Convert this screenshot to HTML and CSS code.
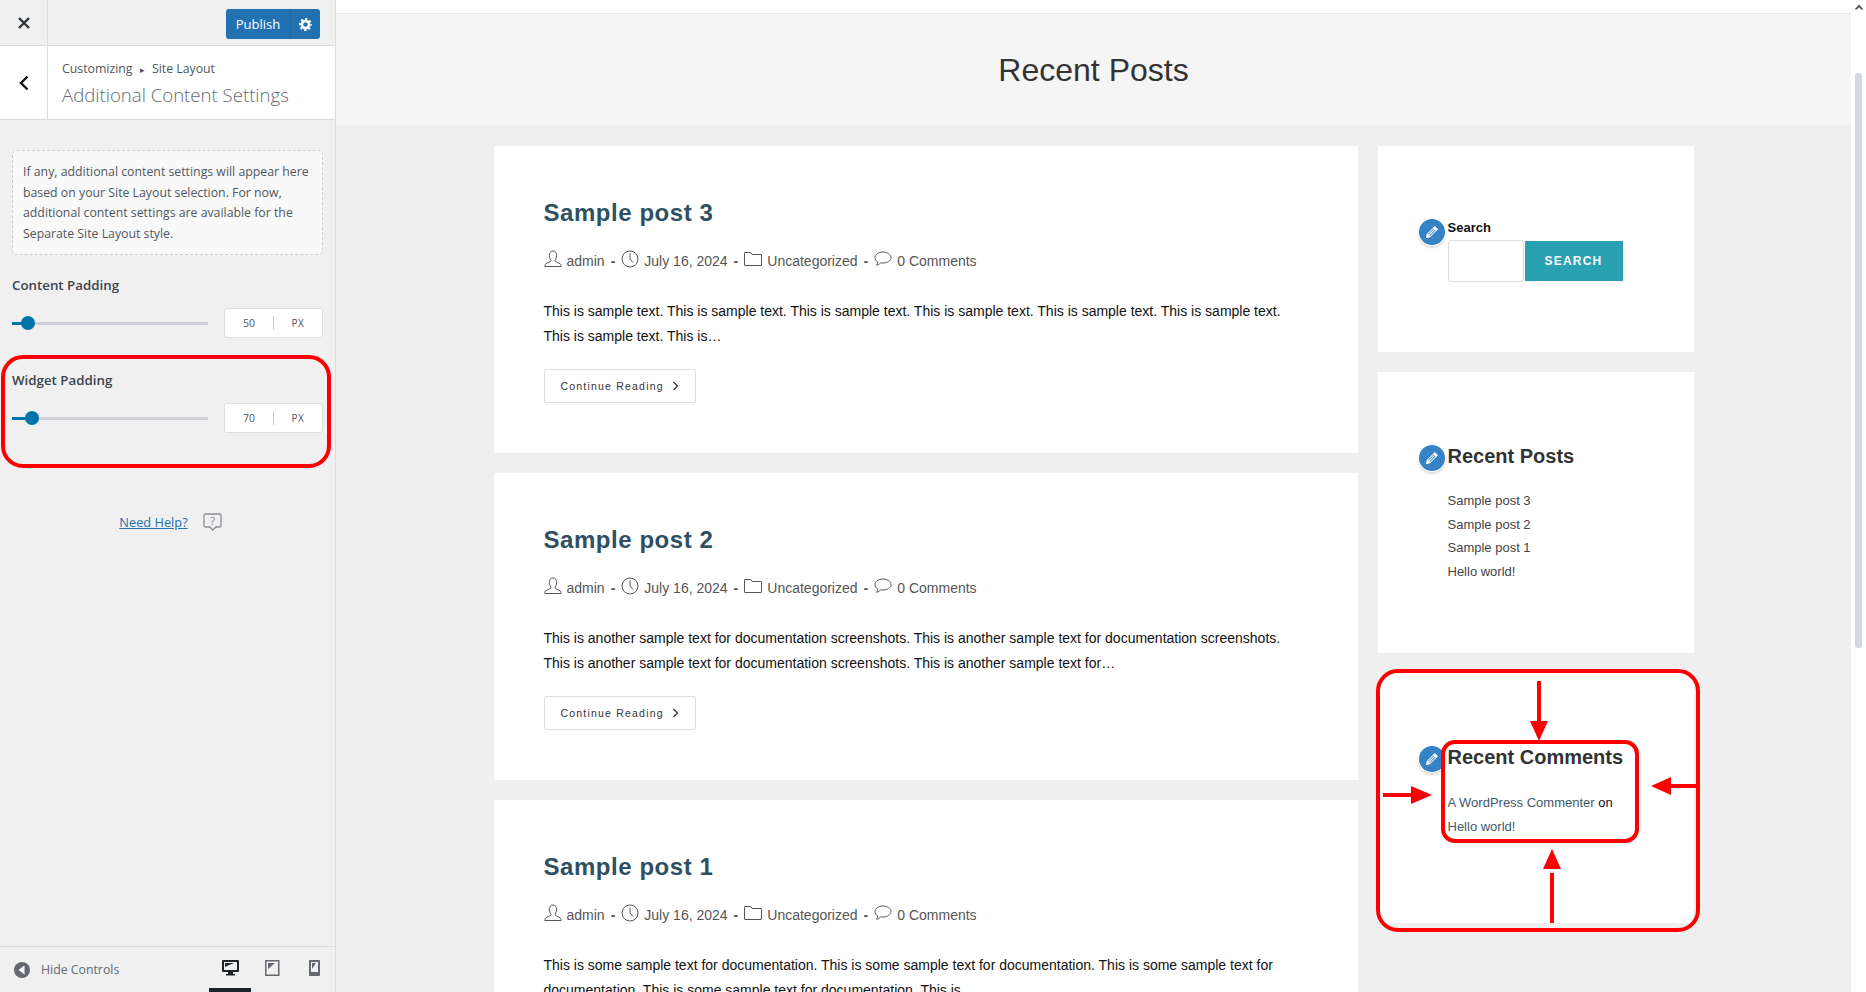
FILE: index.html
```html
<!DOCTYPE html>
<html lang="en">
<head>
    <meta charset="UTF-8">
    <title>Customize: Additional Content Settings</title>
    <link rel="stylesheet" href="styles.css">
</head>
<body>

<div class="app">
    <aside class="controls">
        <div class="top-bar">
            <button class="close-btn" aria-label="Close">
                <svg width="14" height="14" viewBox="0 0 14 14"><path d="M2 2l10 10M12 2L2 12" stroke="#2c3338" stroke-width="2.4" fill="none"/></svg>
            </button>
            <div class="publish">
                <span class="publish-label">Publish</span>
                <span class="publish-gear">
                    <svg width="13" height="13" viewBox="0 0 20 20"><circle cx="10" cy="10" r="5.500" fill="none" stroke="#fff" stroke-width="4"/><circle cx="10" cy="10" r="8.300" fill="none" stroke="#fff" stroke-width="3.400" stroke-dasharray="3.300 3.220" stroke-dashoffset="1.650"/></svg>
                </span>
            </div>
        </div>

        <div class="section-head">
            <button class="back-btn" aria-label="Back">
                <svg width="10" height="16" viewBox="0 0 10 16"><path d="M8.500 1.500L2 8l6.500 6.500" stroke="#111" stroke-width="2.400" fill="none"/></svg>
            </button>
            <div class="section-title">
                <div class="crumbs">Customizing <span class="crumb-arrow">▸</span> Site Layout</div>
                <h2>Additional Content Settings</h2>
            </div>
        </div>

        <div class="panel">
            <div class="notice">If any, additional content settings will appear here based on your Site Layout selection. For now, additional content settings are available for the Separate Site Layout style.</div>

            <div class="setting">
                <div class="setting-label">Content Padding</div>
                <div class="setting-row">
                    <div class="slider"><span class="slider-fill w50"></span><span class="slider-knob"></span></div>
                    <div class="num-box"><span class="num">50</span><span class="unit">PX</span></div>
                </div>
            </div>

            <div class="setting">
                <div class="setting-label">Widget Padding</div>
                <div class="setting-row">
                    <div class="slider"><span class="slider-fill w70"></span><span class="slider-knob"></span></div>
                    <div class="num-box"><span class="num">70</span><span class="unit">PX</span></div>
                </div>
            </div>

            <div class="help">
                <a href="#">Need Help?</a>
                <svg width="19" height="18" viewBox="0 0 19 18"><path d="M2.500 1h14a1.500 1.500 0 0 1 1.500 1.500v10a1.500 1.500 0 0 1-1.500 1.500H13l-3.500 3L7 14H2.500A1.500 1.500 0 0 1 1 12.500v-10A1.500 1.500 0 0 1 2.500 1z" fill="none" stroke="#8c8f94" stroke-width="1.300"/><text x="9.500" y="11.500" text-anchor="middle" class="help-mark">?</text></svg>
            </div>
        </div>

        <div class="foot">
            <div class="hide-controls">
                <svg width="16" height="16" viewBox="0 0 16 16"><circle cx="8" cy="8" r="8" fill="#646970"/><path d="M10.500 3.500v9L4.500 8z" fill="#fff"/></svg>
                <span>Hide Controls</span>
            </div>
            <div class="devices">
                <span class="device active">
                    <svg width="17" height="16" viewBox="0 0 17 16"><path fill="#1d2327" fill-rule="evenodd" d="M1 0h15a1 1 0 0 1 1 1v10a1 1 0 0 1-1 1h-5v2h2v1.500H4V14h2v-2H1a1 1 0 0 1-1-1V1a1 1 0 0 1 1-1zm1 2v8h13V2zm1 1h9L6 5.500 3 7z"/></svg>
                </span>
                <span class="device">
                    <svg width="15" height="16" viewBox="0 0 15 16"><path fill="#646970" fill-rule="evenodd" d="M0 0h14.500v16H0zm1.500 1.500v13H13v-13zM3 3h7L3 9z"/></svg>
                </span>
                <span class="device">
                    <svg width="11" height="16" viewBox="0 0 11 16"><path fill="#646970" fill-rule="evenodd" d="M1 0h9a1 1 0 0 1 1 1v14a1 1 0 0 1-1 1H1a1 1 0 0 1-1-1V1a1 1 0 0 1 1-1zm1 2v10h7V2zm1 1h4L3 9z"/></svg>
                </span>
            </div>
        </div>
    </aside>

    <main class="preview">
        <div class="site">
            <div class="site-top"></div>
            <header class="page-header"><h1>Recent Posts</h1></header>

            <div class="site-body">
                <div class="posts">
                    <article class="post">
                        <h2>Sample post 3</h2>
                        <div class="meta">
                            <svg class="ic" width="18" height="18" viewBox="0 0 18 18"><path d="M9 1c2.300 0 3.700 1.800 3.700 4.300S11.200 10 11 10.800c0 1 4 2 5.500 3.300.6.500.7 2.400.7 2.400H.8s.1-1.900.7-2.400C3 12.800 7 11.800 7 10.800c-.2-.8-1.700-3-1.700-5.500S6.700 1 9 1z" fill="none" stroke="#555" stroke-width="1"/></svg>
                            <span>admin</span><b>-</b>
                            <svg class="ic" width="18" height="18" viewBox="0 0 18 18"><circle cx="9" cy="9" r="8" fill="none" stroke="#555" stroke-width="1"/><path d="M9 3.500V9l3 3.500" fill="none" stroke="#555" stroke-width="1"/></svg>
                            <span>July 16, 2024</span><b>-</b>
                            <svg class="ic" width="18" height="14" viewBox="0 0 18 14"><path d="M.5 1.500v11.500a.5.5 0 0 0 .5.500h16a.5.5 0 0 0 .5-.500V3a.5.5 0 0 0-.5-.500H8L6.800.5H1a.5.5 0 0 0-.5 1z" fill="none" stroke="#555" stroke-width="1"/></svg>
                            <span>Uncategorized</span><b>-</b>
                            <svg class="ic" width="18" height="16" viewBox="0 0 18 16"><path d="M9 1c4.500 0 8 2.500 8 5.500S13.500 12 9 12c-.8 0-1.500 0-2.200-.2C5.500 13 4 14 2.500 14.300c.8-1 1.200-2 1.200-3.300C2 10 1 8.300 1 6.500 1 3.500 4.500 1 9 1z" fill="none" stroke="#555" stroke-width="1"/></svg>
                            <span>0 Comments</span>
                        </div>
                        <p>This is sample text. This is sample text. This is sample text. This is sample text. This is sample text. This is sample text. This is sample text. This is…</p>
                        <a class="more" href="#">Continue Reading <svg width="7" height="10" viewBox="0 0 7 10"><path d="M1.500 1l4 4-4 4" fill="none" stroke="#333" stroke-width="1.300"/></svg></a>
                    </article>

                    <article class="post">
                        <h2>Sample post 2</h2>
                        <div class="meta">
                            <svg class="ic" width="18" height="18" viewBox="0 0 18 18"><path d="M9 1c2.300 0 3.700 1.800 3.700 4.300S11.200 10 11 10.800c0 1 4 2 5.500 3.300.6.500.7 2.400.7 2.400H.8s.1-1.900.7-2.400C3 12.800 7 11.800 7 10.800c-.2-.8-1.700-3-1.700-5.500S6.700 1 9 1z" fill="none" stroke="#555" stroke-width="1"/></svg>
                            <span>admin</span><b>-</b>
                            <svg class="ic" width="18" height="18" viewBox="0 0 18 18"><circle cx="9" cy="9" r="8" fill="none" stroke="#555" stroke-width="1"/><path d="M9 3.500V9l3 3.500" fill="none" stroke="#555" stroke-width="1"/></svg>
                            <span>July 16, 2024</span><b>-</b>
                            <svg class="ic" width="18" height="14" viewBox="0 0 18 14"><path d="M.5 1.500v11.500a.5.5 0 0 0 .5.500h16a.5.5 0 0 0 .5-.500V3a.5.5 0 0 0-.5-.500H8L6.800.5H1a.5.5 0 0 0-.5 1z" fill="none" stroke="#555" stroke-width="1"/></svg>
                            <span>Uncategorized</span><b>-</b>
                            <svg class="ic" width="18" height="16" viewBox="0 0 18 16"><path d="M9 1c4.500 0 8 2.500 8 5.500S13.500 12 9 12c-.8 0-1.500 0-2.200-.2C5.500 13 4 14 2.500 14.300c.8-1 1.200-2 1.200-3.300C2 10 1 8.300 1 6.500 1 3.500 4.500 1 9 1z" fill="none" stroke="#555" stroke-width="1"/></svg>
                            <span>0 Comments</span>
                        </div>
                        <p>This is another sample text for documentation screenshots. This is another sample text for documentation screenshots. This is another sample text for documentation screenshots. This is another sample text for…</p>
                        <a class="more" href="#">Continue Reading <svg width="7" height="10" viewBox="0 0 7 10"><path d="M1.500 1l4 4-4 4" fill="none" stroke="#333" stroke-width="1.300"/></svg></a>
                    </article>

                    <article class="post">
                        <h2>Sample post 1</h2>
                        <div class="meta">
                            <svg class="ic" width="18" height="18" viewBox="0 0 18 18"><path d="M9 1c2.300 0 3.700 1.800 3.700 4.300S11.200 10 11 10.800c0 1 4 2 5.500 3.300.6.500.7 2.400.7 2.400H.8s.1-1.900.7-2.400C3 12.800 7 11.800 7 10.800c-.2-.8-1.700-3-1.700-5.500S6.700 1 9 1z" fill="none" stroke="#555" stroke-width="1"/></svg>
                            <span>admin</span><b>-</b>
                            <svg class="ic" width="18" height="18" viewBox="0 0 18 18"><circle cx="9" cy="9" r="8" fill="none" stroke="#555" stroke-width="1"/><path d="M9 3.500V9l3 3.500" fill="none" stroke="#555" stroke-width="1"/></svg>
                            <span>July 16, 2024</span><b>-</b>
                            <svg class="ic" width="18" height="14" viewBox="0 0 18 14"><path d="M.5 1.500v11.500a.5.5 0 0 0 .5.500h16a.5.5 0 0 0 .5-.500V3a.5.5 0 0 0-.5-.500H8L6.800.5H1a.5.5 0 0 0-.5 1z" fill="none" stroke="#555" stroke-width="1"/></svg>
                            <span>Uncategorized</span><b>-</b>
                            <svg class="ic" width="18" height="16" viewBox="0 0 18 16"><path d="M9 1c4.500 0 8 2.500 8 5.500S13.500 12 9 12c-.8 0-1.500 0-2.200-.2C5.500 13 4 14 2.500 14.300c.8-1 1.200-2 1.200-3.300C2 10 1 8.300 1 6.500 1 3.500 4.500 1 9 1z" fill="none" stroke="#555" stroke-width="1"/></svg>
                            <span>0 Comments</span>
                        </div>
                        <p>This is some sample text for documentation. This is some sample text for documentation. This is some sample text for documentation. This is some sample text for documentation. This is…</p>
                    </article>
                </div>

                <div class="widgets">
                    <section class="widget widget-search">
                        <span class="pencil"><svg width="14" height="14" viewBox="0 0 14 14"><path fill="#fff" d="M9.800 1l3.200 3.200-8 8L.8 13.200 1.800 9zM8.600 3.400L3 9l.6.600 5.600-5.600zm1.400 1.400L4.400 10.400l.6.600L10.600 5.400z"/></svg></span>
                        <label class="search-label">Search</label>
                        <div class="search-row">
                            <input class="search-input" type="text">
                            <button class="search-btn">SEARCH</button>
                        </div>
                    </section>

                    <section class="widget widget-recent">
                        <span class="pencil"><svg width="14" height="14" viewBox="0 0 14 14"><path fill="#fff" d="M9.800 1l3.200 3.200-8 8L.8 13.200 1.800 9zM8.600 3.400L3 9l.6.600 5.600-5.600zm1.400 1.400L4.400 10.400l.6.600L10.600 5.400z"/></svg></span>
                        <h3>Recent Posts</h3>
                        <ul>
                            <li>Sample post 3</li>
                            <li>Sample post 2</li>
                            <li>Sample post 1</li>
                            <li>Hello world!</li>
                        </ul>
                    </section>

                    <section class="widget widget-comments">
                        <span class="pencil"><svg width="14" height="14" viewBox="0 0 14 14"><path fill="#fff" d="M9.800 1l3.200 3.200-8 8L.8 13.200 1.800 9zM8.600 3.400L3 9l.6.600 5.600-5.600zm1.400 1.400L4.400 10.400l.6.600L10.600 5.400z"/></svg></span>
                        <h3>Recent Comments</h3>
                        <p><a href="#">A WordPress Commenter</a> on <a href="#">Hello world!</a></p>
                    </section>
                </div>
            </div>
        </div>

        <div class="scrollbar">
            <svg width="10" height="6" viewBox="0 0 10 6"><path d="M5 .5L9.500 5.500H7L5 3.300 3 5.500H.5z" fill="#555"/></svg>
            <span class="thumb"></span>
        </div>
    </main>
</div>

<!-- red annotations drawn over the screenshot -->
<svg class="marks" width="1866" height="992" viewBox="0 0 1866 992">
    <g fill="none" stroke="#f00" stroke-width="4">
        <rect x="3" y="357" width="326" height="109" rx="20"/>
        <rect x="1378" y="671" width="320" height="259" rx="20"/>
        <rect x="1443" y="742" width="194" height="99" rx="12"/>
        <path d="M1539 681v45M1552 923v-50M1383 795h32M1697 786h-32"/>
    </g>
    <g fill="#f00">
        <path d="M1530 721h18l-9 20zM1543 869h18l-9-20zM1411 786v18l21-9zM1671 777v18l-20-9z"/>
    </g>
</svg>

</body>
</html>
```

FILE: styles.css
```css
* {
    box-sizing: border-box;
}
html, body {
    margin: 0;
    height: 100%;
    overflow: hidden;
}
body {
    font-family: "Liberation Sans", Arial, sans-serif;
    background-color: #efefef;
    color: #333;
}
.app {
    display: flex;
    height: 992px;
}
button {
    border: none;
    background: none;
    padding: 0;
    font: inherit;
}

/* customizer panel */
.controls {
    width: 336px;
    flex-shrink: 0;
    display: flex;
    flex-direction: column;
    background-color: #f0f0f1;
    border-right: 1px solid #dcdcde;
    font-family: "Open Sans", "Noto Sans", sans-serif;
    color: #50575e;
}
.top-bar {
    height: 46px;
    display: flex;
    justify-content: space-between;
    align-items: center;
    padding-right: 15px;
    border-bottom: 1px solid #dcdcde;
}
.close-btn {
    width: 48px;
    height: 45px;
    border-right: 1px solid #dcdcde;
    display: flex;
    align-items: center;
    justify-content: center;
}
.publish {
    display: flex;
    width: 94px;
    height: 30px;
    margin-top: 3px;
    background-color: #2271b1;
    border-radius: 3px;
    color: #fff;
    font-size: 13px;
}
.publish-label {
    width: 64px;
    line-height: 30px;
    text-align: center;
}
.publish-gear {
    flex: 1;
    display: flex;
    align-items: center;
    justify-content: center;
    border-left: 1px solid #1f6aa6;
}
.section-head {
    height: 74px;
    display: flex;
    background-color: #fff;
    border-bottom: 1px solid #dcdcde;
}
.back-btn {
    width: 48px;
    border-right: 1px solid #dcdcde;
    display: flex;
    align-items: center;
    justify-content: center;
}
.section-title {
    padding: 14px 0 0 14px;
}
.crumbs {
    font-size: 12.300px;
    line-height: 18px;
    color: #50575e;
}
.crumb-arrow {
    font-size: 9px;
    margin: 0 4px;
}
.section-title h2 {
    margin: 4px 0 0;
    font-size: 18.600px;
    font-weight: 300;
    line-height: 24px;
    color: #646970;
}
.panel {
    flex: 1;
    padding: 30px 12px 0;
}
.notice {
    height: 105px;
    padding: 11px 10px 0;
    background-color: #f9f9f9;
    border: 1px dashed #ccc;
    border-radius: 5px;
    font-size: 12.300px;
    line-height: 20.700px;
    color: #50575e;
}
.setting {
    margin-top: 21px;
    height: 74px;
}
.setting-label {
    font-size: 13.300px;
    font-weight: 600;
    line-height: 18px;
    color: #3c434a;
}
.setting-row {
    display: flex;
    justify-content: space-between;
    align-items: center;
    margin-top: 14px;
}
.slider {
    position: relative;
    width: 196px;
    height: 3px;
    background-color: #ccd0d4;
}
.slider-fill {
    position: absolute;
    left: 0;
    top: 0;
    height: 3px;
    background-color: #0073aa;
}
.slider-knob {
    position: absolute;
    top: -6px;
    width: 14px;
    height: 14px;
    border-radius: 50%;
    background-color: #0073aa;
}
.slider-fill.w50 {
    width: 16px;
}
.slider-fill.w70 {
    width: 20px;
}
.w50 + .slider-knob {
    left: 9px;
}
.w70 + .slider-knob {
    left: 13px;
}
.num-box {
    width: 99px;
    height: 30px;
    display: flex;
    align-items: center;
    background-color: #fff;
    border: 1px solid #ddd;
    border-radius: 3px;
    font-size: 10.500px;
    color: #50575e;
}
.num {
    width: 49px;
    text-align: center;
    border-right: 1px solid #ccc;
    line-height: 14px;
}
.unit {
    flex: 1;
    text-align: center;
    font-size: 10px;
    letter-spacing: 0.5px;
}
.help {
    display: flex;
    justify-content: center;
    align-items: center;
    gap: 15px;
    margin-top: 68px;
    padding-left: 6px;
    font-size: 12.800px;
}
.help a {
    color: #2271b1;
}
.help-mark {
    font-size: 11px;
    fill: #8c8f94;
}
.foot {
    height: 46px;
    display: flex;
    justify-content: space-between;
    padding: 0 0 0 14px;
    border-top: 1px solid #dcdcde;
}
.hide-controls {
    display: flex;
    align-items: center;
    gap: 11px;
    font-size: 12.300px;
    color: #646970;
}
.devices {
    display: flex;
    align-items: center;
    height: 100%;
}
.device {
    display: flex;
    height: 100%;
    align-items: center;
    justify-content: center;
    width: 42px;
    border-bottom: 4px solid transparent;
}
.device.active {
    border-bottom-color: #1d2327;
}

/* site preview */
.preview {
    flex: 1;
    display: flex;
    background-color: #fff;
    min-width: 0;
}
.site {
    flex: 1;
    background-color: #efefef;
    overflow: hidden;
    min-width: 0;
}
.site-top {
    height: 14px;
    background-color: #fff;
    border-bottom: 1px solid #e9e9e4;
}
.page-header {
    height: 112px;
    background-color: #f5f5f5;
    display: flex;
    align-items: center;
    justify-content: center;
}
.page-header h1 {
    margin: 0;
    font-size: 32px;
    font-weight: 400;
    color: #333;
}
.site-body {
    display: flex;
    justify-content: center;
    gap: 20px;
    padding-top: 20px;
}
.posts {
    width: 864px;
}
.post {
    background-color: #fff;
    padding: 51px 50px 50px;
    height: 307px;
    margin-bottom: 20px;
}
.post h2 {
    margin: 0;
    font-size: 24px;
    line-height: 32px;
    font-weight: 700;
    letter-spacing: 0.550px;
    color: #2f4f63;
}
.meta {
    display: flex;
    align-items: center;
    margin-top: 20px;
    height: 24px;
    font-size: 14px;
    color: #555;
}
.meta .ic {
    margin-right: 5px;
    position: relative;
    top: -2px;
}
.meta b {
    margin: 0 6px;
    font-weight: 700;
}
.post p {
    margin: 26px 0 0;
    font-size: 14px;
    line-height: 25px;
    color: #111;
}
.more {
    display: inline-flex;
    align-items: center;
    gap: 8px;
    margin-top: 20px;
    height: 34px;
    padding: 0 16px;
    border: 1px solid #ddd;
    border-radius: 2px;
    font-size: 10.500px;
    letter-spacing: 1.200px;
    color: #333;
    text-decoration: none;
}
.widgets {
    width: 316px;
}
.widget {
    position: relative;
    background-color: #fff;
    padding: 70px;
    margin-bottom: 20px;
    font-size: 13px;
    color: #333;
}
.widget h3 {
    margin: 0;
    font-size: 20px;
    line-height: 28px;
    font-weight: 700;
    color: #333;
}
.pencil {
    position: absolute;
    left: 41px;
    width: 26px;
    height: 26px;
    border-radius: 50%;
    background-color: #3582c4;
    box-shadow: 0 0 0 1px #fff, 0 2px 2px 1px #ddd;
    display: flex;
    align-items: center;
    justify-content: center;
}
.widget-search {
    height: 206px;
    padding-top: 74px;
}
.widget-search .pencil {
    top: 73px;
}
.search-label {
    display: block;
    font-size: 13px;
    font-weight: 700;
    line-height: 16px;
    color: #111;
}
.search-row {
    display: flex;
    align-items: center;
    gap: 1px;
    margin-top: 4px;
}
.search-input {
    width: 76px;
    height: 42px;
    border: 1px solid #ddd;
    border-radius: 3px;
}
.search-btn {
    width: 98px;
    height: 40px;
    background-color: #2aa0b3;
    color: #fff;
    font-size: 12px;
    font-weight: 700;
    letter-spacing: 1.200px;
}
.widget-recent {
    height: 281px;
}
.widget-recent .pencil {
    top: 73px;
}
.widget-recent ul {
    list-style: none;
    margin: 19px 0 0;
    padding: 0;
    line-height: 23.500px;
    color: #444;
}
.widget-comments {
    height: 250px;
}
.widget-comments .pencil {
    top: 73px;
}
.widget-comments p {
    margin: 20px 0 0;
    line-height: 23.500px;
    width: 176px;
    color: #111;
}
.widget-comments a {
    color: #44596a;
    text-decoration: none;
}
.scrollbar {
    position: relative;
    width: 15px;
    background-color: #fff;
    display: flex;
    flex-direction: column;
    align-items: center;
    padding-top: 4px;
}
.thumb {
    margin-top: 63px;
    flex-shrink: 0;
    width: 7px;
    height: 575px;
    border-radius: 3px;
    background-color: #cfdae3;
}

/* annotation layer */
.marks {
    position: absolute;
    left: 0;
    top: 0;
    pointer-events: none;
}
```
